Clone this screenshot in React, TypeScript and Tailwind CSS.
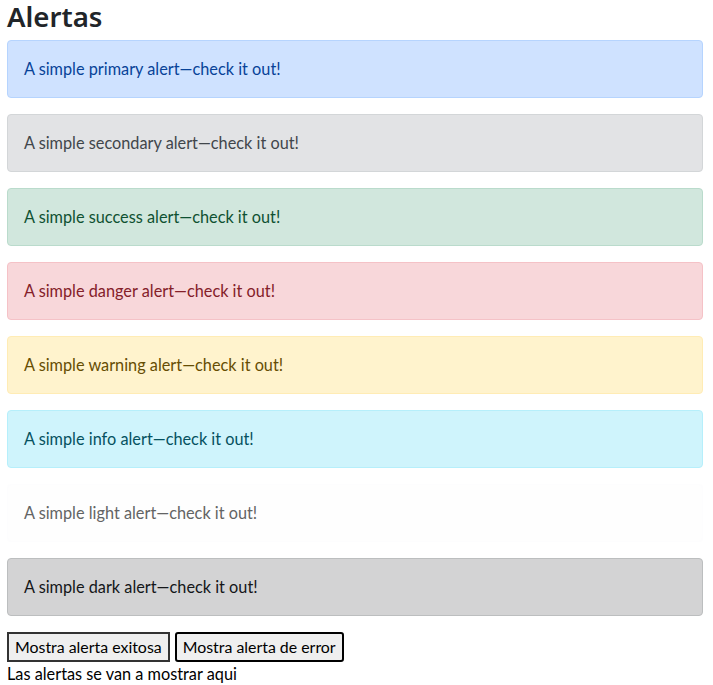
const alerts = [
  { name: 'primary', cls: 'bg-[#cfe2ff] border-[#b6d4fe] text-[#084298]' },
  { name: 'secondary', cls: 'bg-[#e2e3e5] border-[#d3d6d8] text-[#41464b]' },
  { name: 'success', cls: 'bg-[#d1e7dd] border-[#badbcc] text-[#0f5132]' },
  { name: 'danger', cls: 'bg-[#f8d7da] border-[#f5c2c7] text-[#842029]' },
  { name: 'warning', cls: 'bg-[#fff3cd] border-[#ffecb5] text-[#664d03]' },
  { name: 'info', cls: 'bg-[#cff4fc] border-[#b6effb] text-[#055160]' },
  { name: 'light', cls: 'bg-[#fefefe] border-[#fdfdfe] text-[#636464]' },
  { name: 'dark', cls: 'bg-[#d3d3d4] border-[#bcbebf] text-[#141619]' },
];

export default function App() {
  return (
    <div className="bg-white min-h-screen text-[#212529] text-[16.3px] leading-6 font-['Lato',sans-serif]">
      <div className="ml-[7px] w-[696px]">
        {/* Heading */}
        <h2 className="text-[27.6px] leading-8 font-semibold mb-2 font-['Noto_Sans',sans-serif]">Alertas</h2>

        {/* Alerts */}
        {alerts.map((a) => (
          <div key={a.name} className={`border rounded p-4 mb-4 ${a.cls}`} role="alert">
            A simple {a.name} alert—check it out!
          </div>
        ))}

        {/* Buttons */}
        <div className="flex gap-[5px] text-black text-[15.9px]">
          <button className="bg-[#efefef] border-2 border-[#333] px-[6px] py-px leading-6">
            Mostra alerta exitosa
          </button>
          <button className="bg-[#efefef] border-2 border-black rounded-[3px] px-[6px] py-px leading-6">
            Mostra alerta de error
          </button>
        </div>
        <div className="text-black">Las alertas se van a mostrar aqui</div>
      </div>
    </div>
  );
}
